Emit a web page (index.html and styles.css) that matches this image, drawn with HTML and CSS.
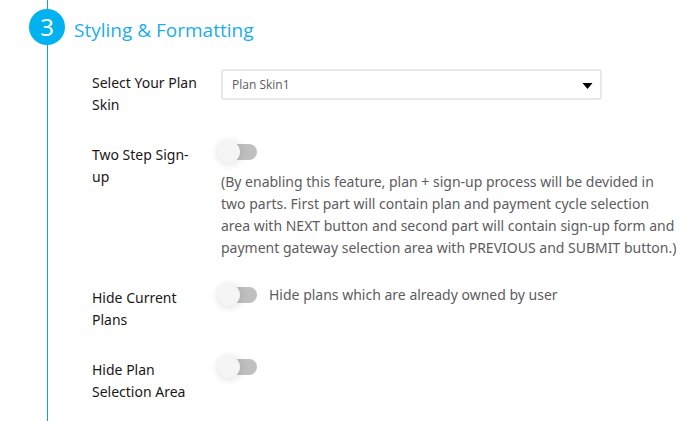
FILE: index.html
```
<!DOCTYPE html>
<html lang="en">

<head>
    <meta charset="UTF-8">
    <meta name="viewport" content="width=device-width, initial-scale=1.0">
    <title>Styling &amp; Formatting</title>
    <link rel="stylesheet" href="styles.css">
</head>

<body>
    <section class="step">
        <div class="step_rail">
            <span class="step_number">3</span>
        </div>
        <div class="step_content">
            <h2 class="step_title">Styling &amp; Formatting</h2>

            <form class="options">
                <div class="option_row">
                    <label class="option_label" for="plan_skin">Select Your Plan Skin</label>
                    <div class="option_field">
                        <div class="select_wrap">
                            <select id="plan_skin" class="select_box">
                                <option selected>Plan Skin1</option>
                            </select>
                            <svg class="select_arrow" width="11" height="6" viewBox="0 0 11 6">
                                <path d="M0.5 0h10L5.5 6z" />
                            </svg>
                        </div>
                    </div>
                </div>

                <div class="option_row">
                    <label class="option_label" for="two_step">Two Step Sign-up</label>
                    <div class="option_field">
                        <div class="switch_line">
                            <input type="checkbox" id="two_step" class="switch">
                        </div>
                        <p class="option_note">(By enabling this feature, plan + sign-up process will be devided in two parts. First part will contain plan and payment cycle selection area with NEXT button and second part will contain sign-up form and payment gateway selection area with PREVIOUS and SUBMIT button.)</p>
                    </div>
                </div>

                <div class="option_row">
                    <label class="option_label" for="hide_current">Hide Current Plans</label>
                    <div class="option_field">
                        <div class="switch_line">
                            <input type="checkbox" id="hide_current" class="switch">
                            <label class="switch_text" for="hide_current">Hide plans which are already owned by user</label>
                        </div>
                    </div>
                </div>

                <div class="option_row">
                    <label class="option_label" for="hide_selection">Hide Plan Selection Area</label>
                    <div class="option_field">
                        <div class="switch_line">
                            <input type="checkbox" id="hide_selection" class="switch">
                        </div>
                    </div>
                </div>
            </form>
        </div>
    </section>
</body>

</html>
```

FILE: styles.css
```
* {
    margin: 0;
    padding: 0;
    box-sizing: border-box;
}

body {
    background-color: #fff;
    color: #191818;
    font-family: "Noto Sans", sans-serif;
    font-size: 14px;
    line-height: 22px;
}

.step {
    display: flex;
    gap: 9px;
    min-height: 100vh;
    padding: 0 22px 0 29px;
}

/* vertical line with the step number on it */
.step_rail {
    display: flex;
    flex-direction: column;
    align-items: center;
    flex: none;
    width: 36px;
}
.step_rail::before,
.step_rail::after {
    content: "";
    width: 1px;
    height: 9px;
    background-color: #1a9fd0;
}
.step_rail::after {
    flex: 1;
}
.step_number {
    width: 36px;
    height: 36px;
    border-radius: 50%;
    background-color: #00b2f0;
    color: #fff;
    font-size: 24px;
    line-height: 36px;
    text-align: center;
}

.step_content {
    flex: 1;
    padding-top: 16px;
}
.step_title {
    color: #1baeea;
    font-family: "Open Sans", sans-serif;
    font-size: 19px;
    font-weight: 400;
    line-height: 28px;
}

.options {
    display: flex;
    flex-direction: column;
    gap: 25px;
    padding: 25px 0 16px 18px;
}
.option_row {
    display: flex;
    gap: 20px;
}
.option_label {
    flex: none;
    width: 109px;
    padding-top: 3px;
}
.option_field {
    flex: 1;
}

.select_wrap {
    position: relative;
    max-width: 381px;
}
.select_box {
    display: block;
    width: 100%;
    height: 31px;
    padding: 0 28px 0 9px;
    border: 2px solid #e8e8e8;
    border-radius: 3px;
    background-color: #fff;
    color: #5c5c60;
    font-family: "Open Sans", sans-serif;
    font-size: 12px;
    appearance: none;
}
.select_arrow {
    position: absolute;
    top: 14px;
    right: 9px;
    fill: #000;
    pointer-events: none;
}

.switch_line {
    display: flex;
    align-items: center;
    gap: 12px;
    height: 22px;
}
.switch {
    position: relative;
    width: 36px;
    height: 16px;
    border-radius: 8px;
    background-color: #bfbfbf;
    appearance: none;
    cursor: pointer;
}
.switch::before {
    content: "";
    position: absolute;
    top: -3px;
    left: -3px;
    width: 22px;
    height: 22px;
    border-radius: 50%;
    background-color: #f5f5f5;
    box-shadow: 0 1px 8px rgba(0, 0, 0, 0.15);
}
.switch:checked {
    background-color: #8fdcf7;
}
.switch:checked::before {
    left: 17px;
    background-color: #00b2f0;
}
.switch_text,
.option_note {
    color: #5c5c60;
}
.option_note {
    padding-top: 8px;
}
```
